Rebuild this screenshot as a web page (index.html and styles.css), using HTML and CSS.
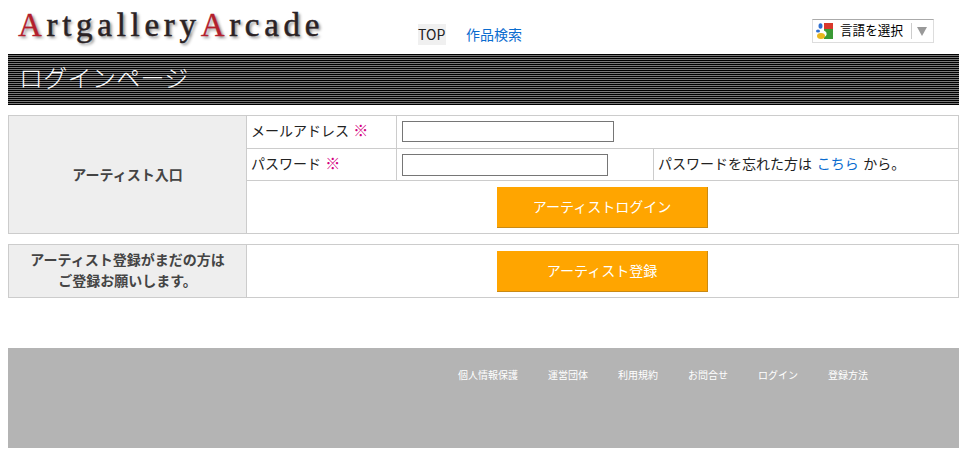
FILE: index.html
```html
<!DOCTYPE html>
<html lang="ja">
<head>
  <meta charset="UTF-8">
  <title>ログインページ</title>
  <link rel="stylesheet" href="styles.css">
</head>
<body>

  <header class="top">
    <div class="logo"><span class="red">A</span>rtgallery<span class="red">A</span>rcade</div>
    <nav class="topnav">
      <a class="current" href="#">TOP</a>
      <a href="#">作品検索</a>
    </nav>
    <div class="translate">
      <svg class="g-icon" width="17" height="16" viewBox="0 0 17 16">
        <rect x="8" y="0" width="9" height="6" fill="#d9382c"/>
        <path d="M8 6h9v10H8v-2c2-.5 3-2 2.5-4C10 8.500 9 8 8 7.500z" fill="#3a9a35"/>
        <ellipse cx="4.500" cy="3" rx="2" ry="2.800" fill="#2f6fd0"/>
        <ellipse cx="2" cy="8" rx="2" ry="1.500" fill="#2f6fd0"/>
        <ellipse cx="5" cy="13" rx="4" ry="3" fill="#eab71e"/>
      </svg>
      <span class="translate-label">言語を選択</span>
      <span class="translate-sep"></span>
      <span class="translate-arrow"></span>
    </div>
  </header>

  <h1 class="banner">ログインページ</h1>

  <table class="form-table login">
    <colgroup>
      <col class="col-head">
      <col class="col-label">
      <col class="col-input">
      <col>
    </colgroup>
    <tr>
      <th rowspan="3">アーティスト入口</th>
      <td class="text">メールアドレス <span class="req">※</span></td>
      <td colspan="2"><input class="mail" type="text"></td>
    </tr>
    <tr class="pass-row">
      <td class="text">パスワード <span class="req">※</span></td>
      <td><input class="pass" type="password"></td>
      <td class="text note">パスワードを忘れた方は <a href="#">こちら</a> から。</td>
    </tr>
    <tr class="btn-row">
      <td class="btn-cell" colspan="3"><a class="btn" href="#">アーティストログイン</a></td>
    </tr>
  </table>

  <table class="form-table signup">
    <colgroup>
      <col class="col-head">
      <col>
    </colgroup>
    <tr class="btn-row">
      <th>アーティスト登録がまだの方は<br>ご登録お願いします。</th>
      <td class="btn-cell"><a class="btn" href="#">アーティスト登録</a></td>
    </tr>
  </table>

  <footer class="foot">
    <a href="#">個人情報保護</a>
    <a href="#">運営団体</a>
    <a href="#">利用規約</a>
    <a href="#">お問合せ</a>
    <a href="#">ログイン</a>
    <a href="#">登録方法</a>
  </footer>

</body>
</html>
```

FILE: styles.css
```css
body {
  margin: 0 6px 0 8px;
  font-family: "Noto Sans CJK JP", "Liberation Sans", sans-serif;
  font-size: 14px;
  color: #222;
  background: #fff;
}

a {
  color: #0a6ccf;
  text-decoration: none;
}

.top {
  display: flex;
  height: 54px;
}

.logo {
  width: 400px;
  padding: 4px 0 0 10px;
  box-sizing: border-box;
  font-family: "Liberation Serif", serif;
  font-size: 33px;
  line-height: 42px;
  letter-spacing: 4.7px;
  color: #2a2224;
  text-shadow: 2px 2px 3px #888;
  -webkit-text-stroke: 0.5px #2a2224;
}

.logo .red {
  color: #b3202c;
  -webkit-text-stroke: 0.3px #b3202c;
}

.topnav {
  display: flex;
  gap: 20px;
  width: 404px;
  padding: 24px 0 0 10px;
  box-sizing: border-box;
}

.topnav a {
  height: 21px;
  line-height: 21px;
}

.topnav .current {
  min-width: 28px;
  color: #222;
  background: #f0f0f0;
}

.translate {
  display: flex;
  align-items: center;
  width: 122px;
  height: 24px;
  margin-top: 19px;
  box-sizing: border-box;
  border: 1px solid #ddd;
  border-top-color: #aaa;
  font-size: 12.6px;
  color: #000;
}

.g-icon {
  margin-left: 3px;
}

.translate-label {
  margin-left: 7px;
  padding-bottom: 2px;
  line-height: 20px;
}

.translate-sep {
  width: 1px;
  height: 16px;
  margin-left: 8px;
  background: #ccc;
}

.translate-arrow {
  width: 0;
  height: 0;
  margin-left: 5px;
  border-top: 9px solid #999;
  border-left: 5.5px solid transparent;
  border-right: 5.5px solid transparent;
}

.banner {
  margin: 0;
  height: 51px;
  padding-left: 11px;
  font-size: 24px;
  font-weight: 300;
  letter-spacing: 0.3px;
  line-height: 46px;
  color: #fff;
  background: repeating-linear-gradient(to bottom, #000 0, #000 1px, #777 1px, #777 2px);
}

.form-table {
  width: 951px;
  border-collapse: collapse;
  table-layout: fixed;
}

.col-head {
  width: 238px;
}

.col-label {
  width: 150px;
}

.col-input {
  width: 257px;
}

.form-table th,
.form-table td {
  border: 1px solid #ccc;
  padding: 0 5px;
  font-weight: normal;
  line-height: 22px;
}

.form-table th {
  padding-bottom: 2px;
  font-weight: bold;
  color: #444;
  background: #eee;
  text-align: center;
}

.login {
  margin-top: 10px;
}

.login tr {
  height: 33px;
}

.login .pass-row {
  height: 32px;
}

.form-table .text {
  padding: 0 4px 4px;
}

.note {
  word-spacing: 1.5px;
}

.signup {
  margin-top: 10px;
}

.signup th {
  line-height: 21px;
}

.form-table tr.btn-row {
  height: 53px;
}

.form-table .btn-cell {
  padding: 0;
  vertical-align: top;
}

.btn {
  display: block;
  width: 211px;
  height: 41px;
  margin: 6px auto 0;
  box-sizing: border-box;
  line-height: 38px;
  text-align: center;
  color: #fff;
  background: #ffa500;
  border-right: 1px solid #c98a14;
  border-bottom: 1px solid #c98a14;
}

.mail,
.pass {
  display: block;
  box-sizing: border-box;
  margin: 0;
  padding: 0;
  border: 1px solid #767676;
  background: #fff;
}

.mail {
  width: 212px;
  height: 21px;
  margin-bottom: 1px;
}

.pass {
  width: 206px;
  height: 22px;
}

.req {
  margin-left: 1px;
  font-size: 15px;
  font-weight: bold;
  color: #d4007f;
}

.foot {
  display: flex;
  gap: 30px;
  height: 100px;
  margin-top: 50px;
  padding: 20px 0 0 450px;
  box-sizing: border-box;
  background: #b4b4b4;
  font-size: 10px;
  line-height: 14px;
}

.foot a {
  color: #fff;
}
```
